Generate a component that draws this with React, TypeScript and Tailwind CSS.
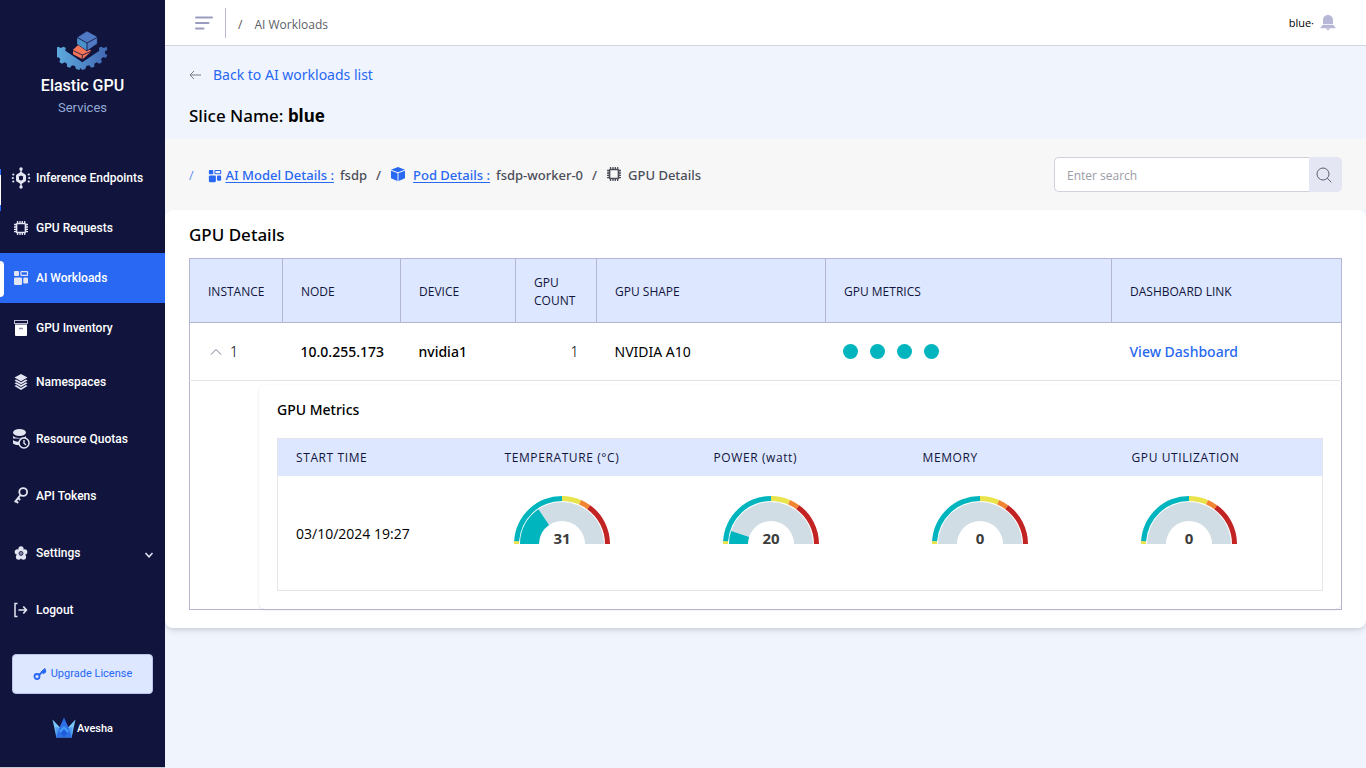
import React, { useState } from 'react';

interface NavItem {
  label: string;
  icon: React.ReactNode;
  tall?: boolean;
  expandable?: boolean;
}

interface Metric {
  label: string;
  value: number;
  fill: number;
}

/**
 * Icons
 */
function ChipIcon({ className }: { className: string }) {
  return (
    <svg viewBox="0 0 16 16" className={className} fill="none" stroke="currentColor" aria-hidden="true">
      <rect x="3.500" y="3.500" width="9" height="9" rx="1" strokeWidth="1.700" />
      <path
        strokeWidth="1.3"
        d="M4.5 3V1M7 3V1M9.3 3V1M11.7 3V1M4.5 15v-2M7 15v-2M9.3 15v-2M11.7 15v-2M3 4.5H1M3 7H1M3 9.3H1M3 11.7H1M15 4.5h-2M15 7h-2M15 9.3h-2M15 11.7h-2"
      />
    </svg>
  );
}

function TilesIcon({ className }: { className: string }) {
  return (
    <svg viewBox="0 0 16 16" className={className} fill="currentColor" aria-hidden="true">
      <rect x="1" y="1" width="5" height="5" rx="1" />
      <rect x="7.9" y="1.6" width="6.6" height="3.8" rx="0.6" fill="none" stroke="currentColor" strokeWidth="1.2" />
      <rect x="1" y="7.5" width="8" height="7.5" rx="1.2" />
      <rect x="10.3" y="7.5" width="4.7" height="6" rx="1.2" />
    </svg>
  );
}

function InferenceIcon() {
  return (
    <svg viewBox="0 0 20 22" className="h-[22px] w-5" fill="currentColor" aria-hidden="true">
      <path d="M10 6.500l3.500 2.200v4.600L10 15.500l-3.500-2.200V8.700z" fill="none" stroke="currentColor" strokeWidth="3" strokeLinejoin="round" />
      <circle cx="10" cy="2" r="1.700" />
      <circle cx="10" cy="20" r="1.700" />
      <path d="M9.300 3h1.400v3H9.300zM9.300 16h1.400v3H9.300z" />
      <circle cx="2.300" cy="7.500" r="1.100" />
      <circle cx="1.800" cy="11" r="1.100" />
      <circle cx="2.300" cy="14.500" r="1.100" />
      <circle cx="17.700" cy="7.500" r="1.100" />
      <circle cx="18.200" cy="11" r="1.100" />
      <circle cx="17.700" cy="14.500" r="1.100" />
    </svg>
  );
}

function ArchiveIcon() {
  return (
    <svg viewBox="0 0 16 18" className="h-[18px] w-4" aria-hidden="true">
      <rect x="1.500" y="1.500" width="13" height="3" fill="none" stroke="#b9bad0" strokeWidth="1" />
      <path d="M2 5.500h12V16a1 1 0 0 1-1 1H3a1 1 0 0 1-1-1z" fill="#fff" />
      <path d="M6 9.500h4" stroke="#8d8fac" strokeWidth="1.500" />
    </svg>
  );
}

function LayersIcon() {
  return (
    <svg viewBox="0 0 16 16" className="size-4" fill="currentColor" aria-hidden="true">
      <path d="M8 0l6.500 3.600L8 7.200 1.500 3.600z" />
      <path d="M1.500 6.400l1.600-.9L8 8.300l4.900-2.800 1.600.9L8 10.200z" />
      <path d="M1.500 9.200l1.600-.9L8 11.100l4.900-2.800 1.600.9L8 13z" />
      <path d="M1.500 12l1.600-.9L8 13.900l4.900-2.800 1.600.9L8 15.900z" />
    </svg>
  );
}

function QuotaIcon() {
  return (
    <svg viewBox="0 0 18 22" className="h-[22px] w-[18px]" aria-hidden="true">
      <ellipse cx="7.500" cy="4.500" rx="6.500" ry="3.500" fill="currentColor" />
      <path d="M1 8c2 2.500 10 2.800 13 0v2.500H1zM1 12c1.500 1.300 4 1.700 7 1.500V17c-4 .3-6-.5-7-1.500z" fill="currentColor" />
      <path d="M1 11.200c2 1.600 5 1.800 8 1.600" stroke="#11153d" strokeWidth="1" fill="none" />
      <circle cx="12" cy="15" r="5" fill="#11153d" stroke="currentColor" strokeWidth="1.500" />
      <path d="M12 12v3.200l2 1.800" fill="none" stroke="currentColor" strokeWidth="1.400" />
    </svg>
  );
}

function TokenIcon() {
  return (
    <svg viewBox="0 0 16 20" className="h-5 w-4" fill="none" stroke="currentColor" aria-hidden="true">
      <circle cx="10.200" cy="6" r="3.900" strokeWidth="1.800" />
      <path d="M7.500 9L1.800 16.200M3 15l2.200 2M5.200 12.300l2 1.700" strokeWidth="1.900" />
    </svg>
  );
}

function SettingsIcon() {
  return (
    <svg viewBox="0 0 16 16" className="size-4" fill="currentColor" aria-hidden="true">
      <circle cx="8" cy="3.800" r="2.600" />
      <circle cx="4.300" cy="6.900" r="2.600" />
      <circle cx="11.700" cy="6.900" r="2.600" />
      <circle cx="5.600" cy="12" r="2.700" />
      <circle cx="10.400" cy="12" r="2.700" />
      <circle cx="8" cy="8.400" r="4.300" />
      <circle cx="8" cy="8.400" r="2" fill="#8486a5" stroke="#11153d" strokeWidth="0.800" />
    </svg>
  );
}

function LogoutIcon() {
  return (
    <svg viewBox="0 0 16 16" className="size-4" fill="none" stroke="currentColor" aria-hidden="true">
      <path d="M4.500 1.500H2v13h2.500" strokeWidth="1.500" />
      <path d="M5.500 8H13M10.300 4.500L13.400 8l-3.100 3.500" strokeWidth="1.700" />
    </svg>
  );
}

function CubeIcon() {
  return (
    <svg viewBox="0 0 16 16" className="mb-1 size-4" aria-hidden="true">
      <path d="M8 1l7 2.700v8.500L8 15.200l-7-3V3.700z" fill="#2868f2" />
      <path d="M1 4.200l7 2.600 7-2.600M8 6.800v8.600" fill="none" stroke="#f7f7f7" strokeWidth="1" />
    </svg>
  );
}

function BellIcon() {
  return (
    <svg viewBox="0 0 16 16" className="size-4" fill="#b7b8d8" aria-hidden="true">
      <path d="M8 0C5 0 3 2.200 3 5v4.200h10V5c0-2.800-2-5-5-5zM2.700 10h10.600l2.200 2.500v.8H.5v-.8zM6.300 13.600h3.400A1.700 1.700 0 0 1 6.300 13.600z" />
    </svg>
  );
}

function GpuLogo() {
  return (
    <svg viewBox="171 88 153 126" className="h-[42px] w-[51px]" aria-hidden="true">
      <defs>
        <linearGradient id="gear" x1="0" x2="1">
          <stop offset="0" stopColor="#5eaee0" />
          <stop offset="1" stopColor="#4268b4" />
        </linearGradient>
      </defs>
      <path
        fill="url(#gear)"
        d="M174 138l9 4 7-4 7 3-1 9 51 35 51-35-1-9 7-3 7 4 9-4 2 9-7 5 0 7 7 4-4 8-10-1-5 6 3 8-8 5-8-4-7 4 0 9-9 3-6-7-9 2-3 9-10 3-4-6-4 6-10-3-3-9-9-2-6 7-9-3 0-9-7-4-8 4-8-5 3-8-5-6-10 1-4-8 7-4 0-7-7-5z"
      />
      <path fill="#f47458" d="M219 147l18-16 38 20-27 25-29-15z" />
      <path fill="none" stroke="#11153d" strokeWidth="2.500" d="M218 149l29 14 29-12M247 163v14" />
      <path fill="#5079c4" stroke="#11153d" strokeWidth="2" d="M261 91l31 17v21l-31 22-30-21v-20z" />
      <path fill="#4a91cc" d="M232 112l29 16v21l-29-19z" />
      <path fill="none" stroke="#11153d" strokeWidth="2.500" d="M231 110l30 17 31-17M261 127v24" />
    </svg>
  );
}

function AveshaLogo() {
  return (
    <svg viewBox="0 0 24 21" className="h-[21px] w-6" aria-hidden="true">
      <path fill="#7cc6f7" d="M.5 2.500L8.500 11l-4 9.500zM23.500 2.500L15.500 11l4 9.500z" />
      <path fill="#4f9ff0" d="M3.500 10l5 1 3.500 9.500H4zM20.500 10l-5 1-3.500 9.500h8z" />
      <path fill="#2f6fe6" d="M12 .5L7 11.500 4 20.500h16l-3-9z" />
      <path fill="#3f9bf5" d="M12 9l-5 5 5 6.500 5-6.500z" />
      <path fill="#1f5bdc" d="M12 12l3.500 4-3.500 4.500L8.500 16z" />
    </svg>
  );
}

const NAV_ITEMS: NavItem[] = [
  { label: 'Inference Endpoints', icon: <InferenceIcon /> },
  { label: 'GPU Requests', icon: <ChipIcon className="size-4" /> },
  { label: 'AI Workloads', icon: <TilesIcon className="size-4" /> },
  { label: 'GPU Inventory', icon: <ArchiveIcon /> },
  { label: 'Namespaces', icon: <LayersIcon />, tall: true },
  { label: 'Resource Quotas', icon: <QuotaIcon />, tall: true },
  { label: 'API Tokens', icon: <TokenIcon />, tall: true },
  { label: 'Settings', icon: <SettingsIcon />, tall: true, expandable: true },
  { label: 'Logout', icon: <LogoutIcon />, tall: true },
];

const METRICS: Metric[] = [
  { label: 'TEMPERATURE (°C)', value: 31, fill: 31 },
  { label: 'POWER (watt)', value: 20, fill: 10 },
  { label: 'MEMORY', value: 0, fill: 0 },
  { label: 'GPU UTILIZATION', value: 0, fill: 0 },
];

// threshold ring: from %, to %, colour
const RING: [number, number, string][] = [
  [0, 2, '#e9e34c'],
  [2, 50, '#00b5be'],
  [50, 63, '#e9e34c'],
  [63, 70, '#f28532'],
  [70, 100, '#c22323'],
];

// a slice of a half circle centred on 48,48
function slice(from: number, to: number, outer: number, inner: number) {
  const at = (percent: number, r: number) => {
    const a = Math.PI * (1 - percent / 100);
    return `${48 + r * Math.cos(a)} ${48 - r * Math.sin(a)}`;
  };
  return `M${at(from, outer)}A${outer} ${outer} 0 0 1 ${at(to, outer)}L${at(to, inner)}A${inner} ${inner} 0 0 0 ${at(from, inner)}Z`;
}

function Gauge({ metric }: { metric: Metric }) {
  return (
    <svg viewBox="0 0 96 56" className="h-14 w-24" role="img" aria-label={`${metric.label} ${metric.value}`}>
      {RING.map(([from, to, color]) => (
        <path key={from} d={slice(from, to, 48, 43)} fill={color} />
      ))}
      <path d={slice(0, 100, 42, 23)} fill="#d1dde5" />
      {metric.fill > 0 && <path d={slice(0, metric.fill, 42, 23)} fill="#00b5be" />}
      <text x="48" y="48" textAnchor="middle" className="fill-[#3c3c3c] text-[15px] font-bold">
        {metric.value}
      </text>
    </svg>
  );
}

function Sidebar() {
  return (
    <aside className="flex min-h-screen w-[165px] shrink-0 flex-col border-b border-[#c9cad8] bg-[#11153d] font-['Roboto',sans-serif] text-white">
      <div className="flex h-[153px] flex-col items-center pt-[30px]">
        <GpuLogo />
        <div className="mt-1 text-base leading-5 font-medium">Elastic GPU</div>
        <div className="text-[13px] leading-6 text-[#93a9d6]">Services</div>
      </div>

      <nav>
        {NAV_ITEMS.map((item) => {
          const active = item.label === 'AI Workloads';
          return (
            <a
              key={item.label}
              href="#"
              className={`relative flex items-center gap-1 pl-[10px] text-xs font-medium ${item.tall ? 'h-[57px]' : 'h-[50px]'} ${
                active ? 'bg-[#2868f2]' : ''
              }`}
            >
              {active && <span className="absolute top-2 left-0 h-9 w-1 rounded-r bg-white" />}
              {item.label === 'Inference Endpoints' && (
                <span className="absolute top-4 left-0 h-[42px] w-px border-y-[6px] border-[#2868f2] bg-white" />
              )}
              <span className="flex w-[22px] justify-center text-[#e4e5f2]">{item.icon}</span>
              <span>{item.label}</span>
              {item.expandable && (
                <svg viewBox="0 0 10 6" className="mt-1 mr-[11px] ml-auto h-[6px] w-[10px]" fill="none" stroke="#e4e5f2" strokeWidth="1.500" aria-hidden="true">
                  <path d="M1.500 1L5 4.800 8.500 1" />
                </svg>
              )}
            </a>
          );
        })}
      </nav>

      <button
        type="button"
        className="mx-3 mt-4 flex h-10 items-center justify-center gap-1 rounded border border-[#b9c4e8] bg-[#dde7ff] text-[11px] text-[#2868f2]"
      >
        <svg viewBox="0 0 14 14" className="size-[14px]" fill="none" stroke="currentColor" aria-hidden="true">
          <circle cx="4" cy="9.500" r="2.500" strokeWidth="1.800" />
          <path d="M6 8l5.500-5" strokeWidth="1.800" />
          <path d="M8 5l4-3.500.8 3.500-2 1.500z" fill="currentColor" />
        </svg>
        Upgrade License
      </button>

      <div className="mt-[23px] flex items-center justify-center gap-px">
        <AveshaLogo />
        <span className="pt-1 text-[11px] font-medium">Avesha</span>
      </div>
    </aside>
  );
}

function TopBar() {
  return (
    <header className="flex h-[46px] items-center border-b border-[#d2d3de] bg-white px-[30px] text-xs">
      <button type="button" aria-label="Toggle menu">
        <svg viewBox="0 0 18 14" className="h-[14px] w-[18px]" stroke="#9a9cbf" strokeWidth="2" strokeLinecap="round" aria-hidden="true">
          <path d="M1 1.500h16M1 7h12.500M1 12.500h7.500" />
        </svg>
      </button>
      <span className="ml-3 h-[30px] w-px bg-[#b7b8d8]" />
      <span className="ml-3 pt-1 text-[#555]">/</span>
      <span className="ml-3 pt-1 text-[#5c5f68]">AI Workloads</span>
      <span className="ml-auto pt-[2px] text-[11px]">blue·</span>
      <button type="button" aria-label="Notifications" className="ml-[6px]">
        <BellIcon />
      </button>
    </header>
  );
}

function Breadcrumb() {
  return (
    <div className="flex h-[71px] items-center justify-between bg-[#f7f7f7] px-6 text-[#4b4d59]">
      <nav aria-label="Breadcrumb" className="flex items-center pt-[2px] font-['Noto_Sans',sans-serif] text-[13px] font-medium">
        <span className="font-light text-[#2868f2]">/</span>
        <TilesIcon className="mr-1 ml-[14px] size-[14px] text-[#2868f2]" />
        <a href="#" className="text-[#2868f2] underline underline-offset-2">AI Model Details :</a>
        <span className="ml-[6px]">fsdp</span>
        <span className="mx-[9px]">/</span>
        <CubeIcon />
        <a href="#" className="ml-[7px] text-[#2868f2] underline underline-offset-2">Pod Details :</a>
        <span className="ml-[6px]">fsdp-worker-0</span>
        <span className="mx-[9px]">/</span>
        <ChipIcon className="mr-[6px] mb-1 size-4" />
        <span>GPU Details</span>
      </nav>
      <form className="flex h-[35px] w-72">
        <input
          type="search"
          aria-label="Search"
          placeholder="Enter search"
          className="min-w-0 flex-1 rounded-l-[5px] border border-r-0 border-[#d0d1dd] bg-white px-3 pt-[2px] text-xs placeholder:text-[#9a9ca6]"
        />
        <button type="button" aria-label="Search" className="flex w-[33px] items-center justify-center rounded-r-[5px] bg-[#e4e6f3] pr-1">
          <svg viewBox="0 0 16 16" className="size-4" fill="none" stroke="#5d6075" aria-hidden="true">
            <circle cx="7" cy="7" r="6" />
            <path d="M11.300 11.300l4 4" />
          </svg>
        </button>
      </form>
    </div>
  );
}

function MetricsPanel() {
  return (
    <div className="mt-1 ml-[69px] h-[224px] rounded-md px-[18px] pt-[13px] shadow">
      <h3 className="font-['Noto_Sans',sans-serif] text-sm leading-6 font-medium">GPU Metrics</h3>
      <table className="mt-4 w-full table-fixed border-collapse border border-[#e4e4e7] text-left">
        <thead className="bg-[#dde7ff]">
          <tr className="h-[37px] text-xs tracking-wider text-[#11153d]">
            <th className="pt-[2px] pl-[18px] font-normal">START TIME</th>
            {METRICS.map((metric) => (
              <th key={metric.label} className="pt-[2px] pl-[18px] font-normal">{metric.label}</th>
            ))}
          </tr>
        </thead>
        <tbody>
          <tr className="h-[115px]">
            <td className="pt-[2px] pl-[18px] text-sm">03/10/2024 19:27</td>
            {METRICS.map((metric) => (
              <td key={metric.label} className="pt-5 pl-[27px] align-top">
                <Gauge metric={metric} />
              </td>
            ))}
          </tr>
        </tbody>
      </table>
    </div>
  );
}

function GpuTable() {
  const [open, setOpen] = useState(true);

  return (
    <table className="w-full table-fixed border-collapse border border-[#b3b5d3] text-left">
      <colgroup>
        <col className="w-[93px]" />
        <col className="w-[118px]" />
        <col className="w-[115px]" />
        <col className="w-[81px]" />
        <col className="w-[229px]" />
        <col className="w-[286px]" />
        <col />
      </colgroup>
      <thead className="bg-[#dde7ff]">
        <tr className="h-16 text-xs leading-[18px] text-[#11153d]">
          {['INSTANCE', 'NODE', 'DEVICE', 'GPU COUNT', 'GPU SHAPE', 'GPU METRICS', 'DASHBOARD LINK'].map((name) => (
            <th key={name} className="border border-[#b3b5d3] px-[18px] pt-[2px] font-normal">{name}</th>
          ))}
        </tr>
      </thead>
      <tbody>
        <tr className="h-[58px] border-b border-[#e4e4e7] font-['Noto_Sans',sans-serif] text-sm">
          <td className="pl-5 font-light">
            <button type="button" aria-expanded={open} onClick={() => setOpen(!open)} className="flex items-center gap-2">
              <svg viewBox="0 0 12 8" className={open ? 'h-2 w-3' : 'h-2 w-3 rotate-180'} fill="none" stroke="#777a90" aria-hidden="true">
                <path d="M1 6.500L6 1.500l5 5" />
              </svg>
              1
            </button>
          </td>
          <td className="px-[18px] font-medium">10.0.255.173</td>
          <td className="px-[18px] font-medium">nvidia1</td>
          <td className="px-[18px] text-right font-light">1</td>
          <td className="px-[18px]">NVIDIA A10</td>
          <td className="px-[17px]">
            <div className="flex gap-3">
              {METRICS.map((metric) => (
                <span key={metric.label} title={metric.label} className="size-[15px] rounded-full bg-[#00b5be]" />
              ))}
            </div>
          </td>
          <td className="px-[18px]">
            <a href="#" className="font-medium text-[#2868f2]">View Dashboard</a>
          </td>
        </tr>
        {open && (
          <tr>
            <td colSpan={7} className="p-0">
              <MetricsPanel />
            </td>
          </tr>
        )}
      </tbody>
    </table>
  );
}

export default function App() {
  return (
    <div className="flex min-h-screen bg-[#eff4fd] font-['Open_Sans',sans-serif] text-black">
      <Sidebar />
      <div className="min-w-0 flex-1">
        <TopBar />
        <main>
          <div className="flex h-[93px] flex-col px-6 pt-[17px] font-['Noto_Sans',sans-serif]">
            <a href="#" className="flex items-center gap-3 text-sm leading-6 text-[#2868f2]">
              <svg viewBox="0 0 12 10" className="h-[10px] w-3" fill="none" stroke="#777a85" aria-hidden="true">
                <path d="M12 5H1M5 1L1 5l4 4" />
              </svg>
              Back to AI workloads list
            </a>
            <h1 className="mt-[17px] text-[17px] leading-6 font-medium">
              Slice Name: <strong className="font-bold">blue</strong>
            </h1>
          </div>
          <Breadcrumb />
          <section className="rounded-lg bg-white px-6 pt-[13px] pb-[18px] shadow-md">
            <h2 className="mb-[11px] font-['Noto_Sans',sans-serif] text-[17px] leading-6 font-medium">GPU Details</h2>
            <GpuTable />
          </section>
        </main>
      </div>
    </div>
  );
}
